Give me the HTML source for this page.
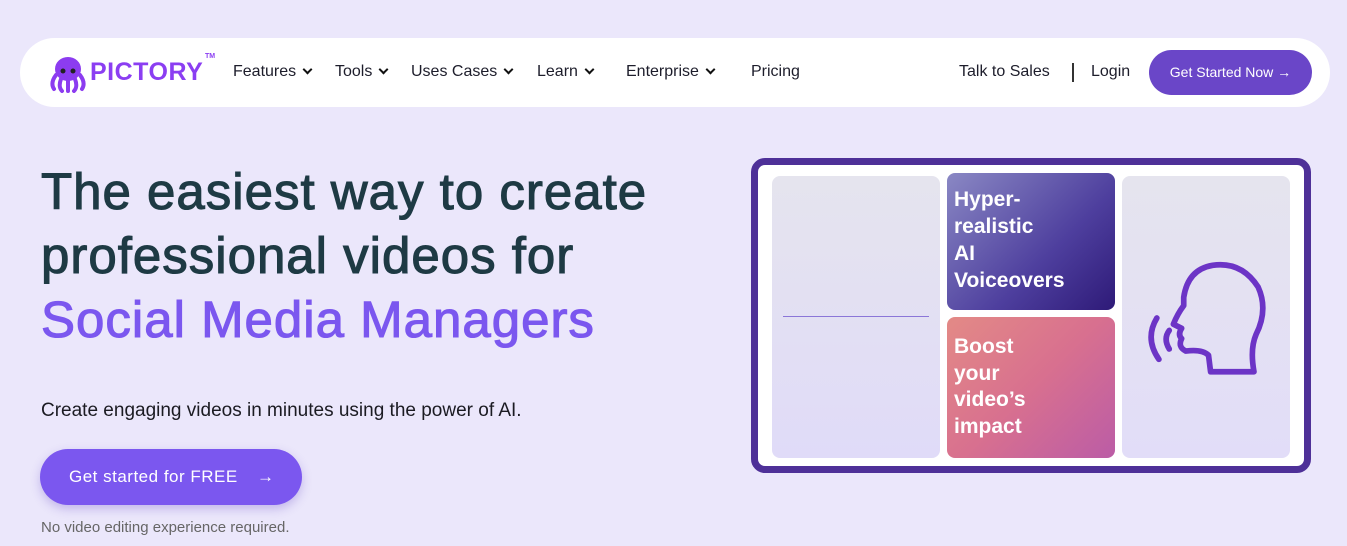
<!DOCTYPE html>
<html><head><style>
*{margin:0;padding:0;box-sizing:border-box}
body{width:1347px;height:546px;background:#ebe7fb;font-family:"Liberation Sans",sans-serif;position:relative;overflow:hidden}
.nav{position:absolute;left:20px;top:38px;width:1310px;height:69px;background:#fff;border-radius:35px}
.n{position:absolute;top:63px;font-size:16px;color:#1d1d2b}
.chev{display:inline-block;width:7px;height:7px;border-right:2px solid #111;border-bottom:2px solid #111;transform:rotate(45deg);margin-left:8px;position:relative;top:-3px}
h1{position:absolute;left:41px;top:160px;font-size:51px;line-height:64px;font-weight:normal;-webkit-text-stroke:1.1px #1e3a44;color:#1e3a44;letter-spacing:1px}
h1 span{color:#7b57ef;-webkit-text-stroke:1.1px #7b57ef}
.card{position:absolute;border-radius:8px}
.ct{position:absolute;color:#fff;font-weight:bold;font-size:21px;line-height:27px}
</style></head><body>
<div class="nav"></div>
<svg style="position:absolute;left:48px;top:53px" width="40" height="40" viewBox="0 0 40 40">
<ellipse cx="20" cy="16" rx="13" ry="12" fill="#8c3cf0"/>
<path d="M8 22 Q2 30 6 36 M13 26 Q10 34 14 38 M20 27 L20 38 M27 26 Q30 34 26 38 M32 22 Q38 30 34 36" stroke="#8c3cf0" stroke-width="4" fill="none" stroke-linecap="round"/>
<circle cx="15" cy="18" r="2.5" fill="#222"/><circle cx="25" cy="18" r="2.5" fill="#222"/>
</svg>
<div style="position:absolute;left:90px;top:58px;font-size:25px;font-weight:bold;color:#8b3ef2;letter-spacing:0.5px">PICTORY</div>
<div style="position:absolute;left:205px;top:53px;font-size:7px;font-weight:bold;color:#8b3ef2">TM</div>
<div class="n" style="left:233px">Features<span class="chev"></span></div>
<div class="n" style="left:335px">Tools<span class="chev"></span></div>
<div class="n" style="left:411px">Uses Cases<span class="chev"></span></div>
<div class="n" style="left:537px">Learn<span class="chev"></span></div>
<div class="n" style="left:626px">Enterprise<span class="chev"></span></div>
<div class="n" style="left:751px">Pricing</div>
<div class="n" style="left:959px">Talk to Sales</div>
<div style="position:absolute;left:1072px;top:63px;width:1.5px;height:19px;background:#333"></div>
<div class="n" style="left:1091px">Login</div>
<div style="position:absolute;left:1149px;top:50px;width:163px;height:45px;border-radius:23px;background:#6a46c8;color:#fff;font-size:14px;line-height:45px;text-align:center">Get Started Now →</div>
<h1>The easiest way to create<br>professional videos for<br><span>Social Media Managers</span></h1>
<div style="position:absolute;left:41px;top:400px;font-size:19px;color:#1b1b22">Create engaging videos in minutes using the power of AI.</div>
<div style="position:absolute;left:40px;top:449px;width:262px;height:56px;border-radius:28px;background:#7b57ef;color:#fff;font-size:17px;line-height:56px;padding-left:29px;letter-spacing:0.5px;box-shadow:0 4px 10px rgba(100,70,200,.3)">Get started for FREE <span style="margin-left:14px">→</span></div>
<div style="position:absolute;left:41px;top:519px;font-size:15px;color:#666">No video editing experience required.</div>
<div style="position:absolute;left:751px;top:158px;width:560px;height:315px;border:7px solid #4e3098;border-radius:14px;background:#fff"></div>
<div class="card" style="left:772px;top:176px;width:168px;height:282px;background:linear-gradient(#e5e4ee,#e0dbf8)"></div>
<div style="position:absolute;left:783px;top:316px;width:146px;height:1px;background:#8b76d8"></div>
<div class="card" style="left:947px;top:173px;width:168px;height:137px;background:linear-gradient(135deg,#8a88c4,#4e3f9e 60%,#2e1a78)"></div>
<div class="ct" style="left:954px;top:186px">Hyper-<br>realistic<br>AI<br>Voiceovers</div>
<div class="card" style="left:947px;top:317px;width:168px;height:141px;background:linear-gradient(135deg,#e38a86,#d8708f 50%,#bb5ca6)"></div>
<div class="ct" style="left:954px;top:334px;line-height:26.5px">Boost<br>your<br>video’s<br>impact</div>
<div class="card" style="left:1122px;top:176px;width:168px;height:282px;background:linear-gradient(#e5e4ee,#e2ddf8)"></div>
<svg style="position:absolute;left:1138px;top:256px" width="140" height="124" viewBox="0 0 135 120">
<g fill="none" stroke="#6c34c6" stroke-width="5.5" stroke-linecap="round" stroke-linejoin="round">
<path d="M70 112 L112 112 Q108 90 114 76 Q126 52 116 30 Q100 5 72 9 Q48 13 44 40 L44 48 Q38 56 34 66 L42 70 Q38 76 42 80 Q38 88 46 92 Q62 90 68 96 Z"/>
<path d="M18 60 Q6 80 20 100"/>
<path d="M30 72 Q24 80 30 90"/>
</g></svg>
</body></html>
